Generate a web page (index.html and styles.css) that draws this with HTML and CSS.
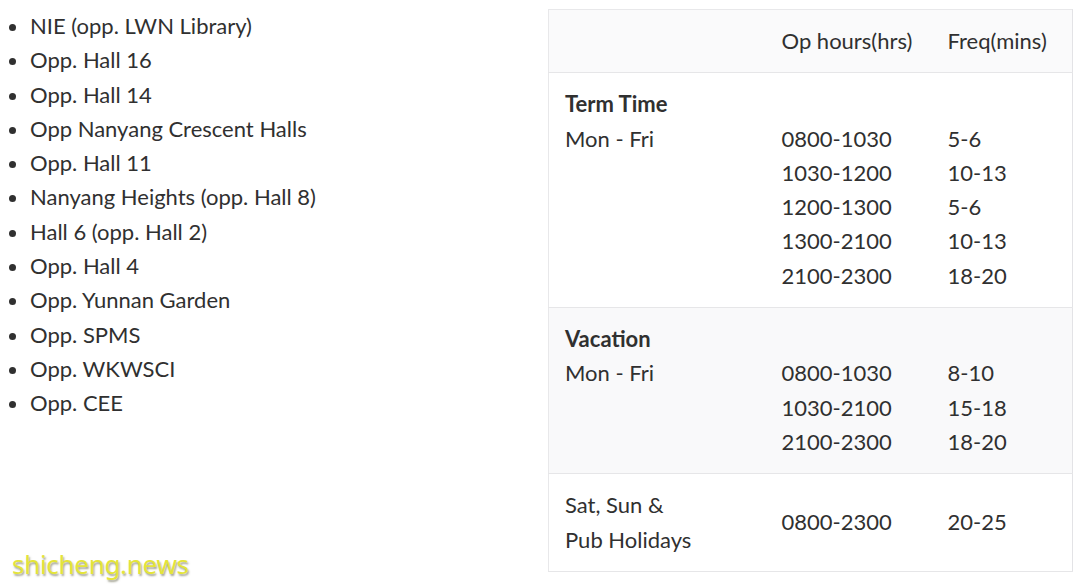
FILE: index.html
```html
<!DOCTYPE html>
<html>
<head>
<meta charset="utf-8">
<link rel="stylesheet" href="styles.css">
</head>
<body>
<div class="page">
  <div class="stops">
    <ul class="stop-list">
      <li>NIE (opp. LWN Library)</li>
      <li>Opp. Hall 16</li>
      <li>Opp. Hall 14</li>
      <li>Opp Nanyang Crescent Halls</li>
      <li>Opp. Hall 11</li>
      <li>Nanyang Heights (opp. Hall 8)</li>
      <li>Hall 6 (opp. Hall 2)</li>
      <li>Opp. Hall 4</li>
      <li>Opp. Yunnan Garden</li>
      <li>Opp. SPMS</li>
      <li>Opp. WKWSCI</li>
      <li>Opp. CEE</li>
    </ul>
  </div>
  <table class="schedule">
    <colgroup>
      <col class="c1"><col class="c2"><col class="c3">
    </colgroup>
    <thead>
      <tr class="head">
        <th></th>
        <th>Op hours(hrs)</th>
        <th>Freq(mins)</th>
      </tr>
    </thead>
    <tbody>
      <tr class="term">
        <td class="label"><strong>Term Time</strong><br>Mon - Fri</td>
        <td class="offset">0800-1030<br>1030-1200<br>1200-1300<br>1300-2100<br>2100-2300</td>
        <td class="offset">5-6<br>10-13<br>5-6<br>10-13<br>18-20</td>
      </tr>
      <tr class="vacation">
        <td class="label"><strong>Vacation</strong><br>Mon - Fri</td>
        <td class="offset">0800-1030<br>1030-2100<br>2100-2300</td>
        <td class="offset">8-10<br>15-18<br>18-20</td>
      </tr>
      <tr class="weekend">
        <td class="label">Sat, Sun &amp;<br>Pub Holidays</td>
        <td class="mid">0800-2300</td>
        <td class="mid">20-25</td>
      </tr>
    </tbody>
  </table>
</div>
<div class="watermark">shicheng.news</div>
</body>
</html>
```
FILE: styles.css
```css
html, body {
  margin: 0;
  padding: 0;
  background: #ffffff;
}

body {
  font-family: Lato, "Liberation Sans", sans-serif;
  font-size: 22px;
  line-height: 34.3px;
  color: #303030;
  width: 1080px;
  height: 586px;
  overflow: hidden;
  position: relative;
}

.page {
  display: flex;
  align-items: flex-start;
  padding-top: 9px;
}

.stops {
  width: 548px;
  flex: none;
}

.stop-list {
  margin: 0;
  padding-left: 30px;
  list-style: disc;
}

.schedule {
  flex: none;
  width: 524px;
  border-collapse: collapse;
  table-layout: fixed;
  border: 1px solid #e8e8ea;
  border-right-color: #e3e3e6;
}

.c1 { width: 217px; }
.c2 { width: 166px; }
.c3 { width: 141px; }

.schedule th,
.schedule td {
  padding: 14px 16px;
  text-align: left;
  font-weight: normal;
  white-space: nowrap;
}

.schedule tr {
  border-bottom: 1px solid #e6e6e8;
}

.head {
  background: #fafafb;
}

.head th {
  vertical-align: middle;
}

.term {
  background: #ffffff;
}

.vacation {
  background: #f9f9fa;
}

.weekend {
  background: #ffffff;
}

.label {
  vertical-align: top;
}

.label strong {
  font-weight: 700;
}

.offset {
  vertical-align: top;
  padding-top: 48.3px !important;
}

.mid {
  vertical-align: middle;
}

.watermark {
  position: absolute;
  left: 12px;
  top: 546px;
  font-family: "Noto Sans", "DejaVu Sans", sans-serif;
  font-size: 26px;
  line-height: 36px;
  letter-spacing: -0.3px;
  color: #e4e43a;
  text-shadow: 1px 2px 2px rgba(90, 90, 60, 0.55);
}
```
